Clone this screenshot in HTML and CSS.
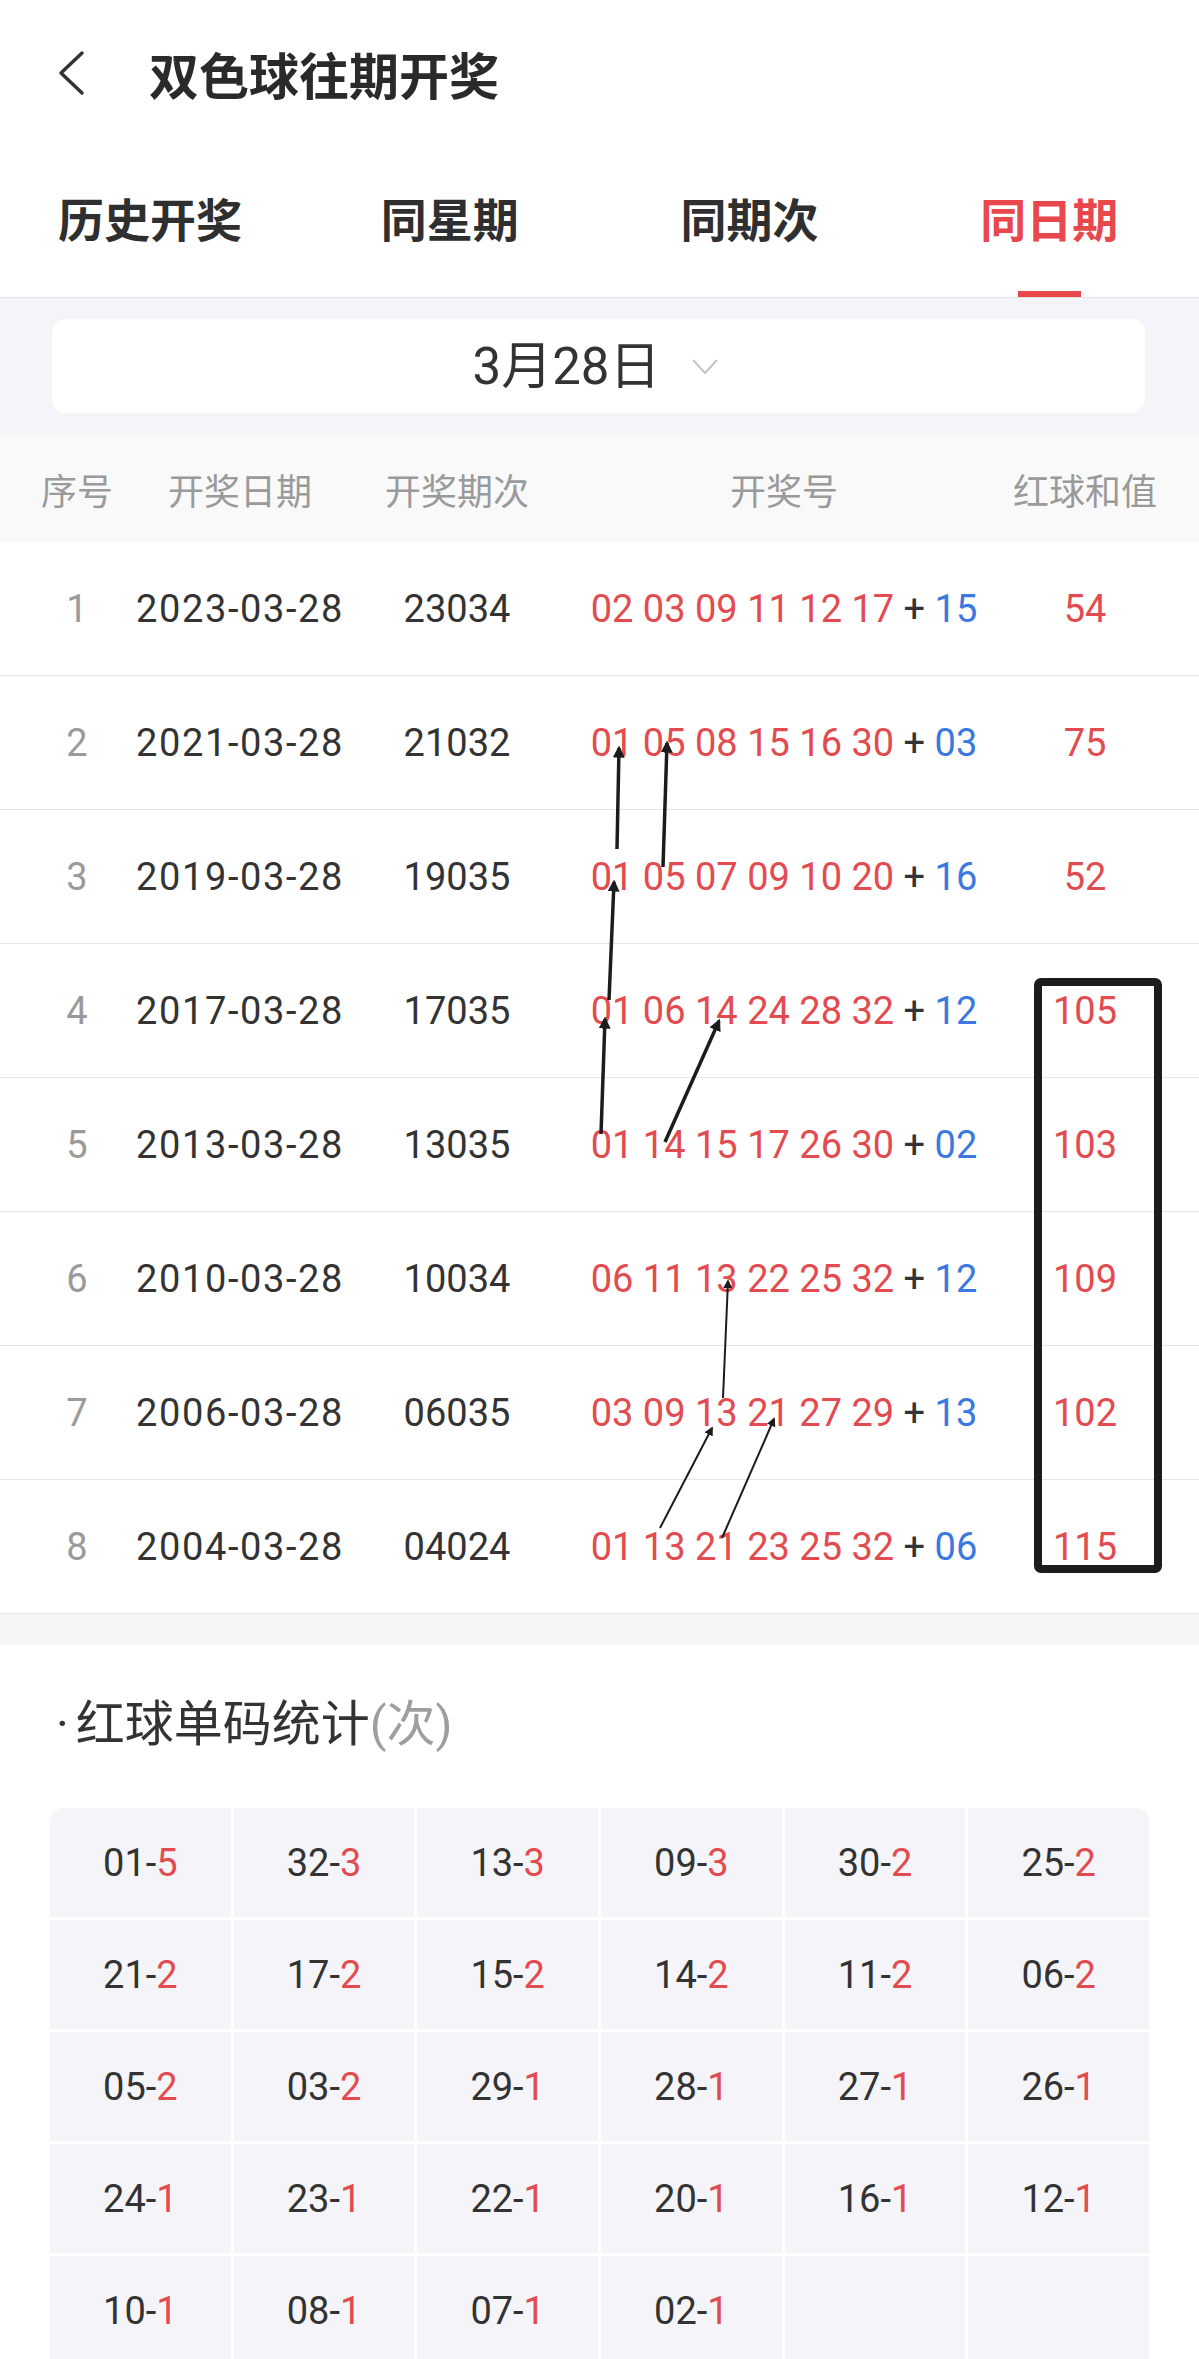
FILE: index.html
```html
<!DOCTYPE html>
<html lang="zh-CN">
<head>
    <meta charset="UTF-8">
    <meta name="viewport" content="width=device-width, initial-scale=1.0">
    <title>双色球往期开奖</title>
    <link rel="stylesheet" href="styles.css">
</head>
<body>
    <div class="page">
        <header class="top-bar">
            <svg class="back-icon" width="30" height="46" viewBox="0 0 30 46">
                <polyline points="26,3 5,23 26,43" fill="none" stroke="#333" stroke-width="3.5" stroke-linecap="round" stroke-linejoin="round"/>
            </svg>
            <h1>双色球往期开奖</h1>
        </header>

        <nav class="tabs">
            <div class="tab">历史开奖</div>
            <div class="tab">同星期</div>
            <div class="tab">同期次</div>
            <div class="tab active">同日期</div>
        </nav>

        <div class="date-bar">
            <div class="date-picker">
                <span class="date-text">3月28日</span>
                <svg width="28" height="17" viewBox="0 0 28 17">
                    <polyline points="2,2 14,15 26,2" fill="none" stroke="#c4c4c4" stroke-width="2"/>
                </svg>
            </div>
        </div>

        <div class="draw-table">
            <div class="row head">
                <div>序号</div>
                <div>开奖日期</div>
                <div>开奖期次</div>
                <div>开奖号</div>
                <div>红球和值</div>
            </div>
            <div class="row">
                <div class="no">1</div>
                <div class="date">2023-03-28</div>
                <div>23034</div>
                <div><span class="red">02 03 09 11 12 17</span> + <span class="blue">15</span></div>
                <div class="red">54</div>
            </div>
            <div class="row">
                <div class="no">2</div>
                <div class="date">2021-03-28</div>
                <div>21032</div>
                <div><span class="red">01 05 08 15 16 30</span> + <span class="blue">03</span></div>
                <div class="red">75</div>
            </div>
            <div class="row">
                <div class="no">3</div>
                <div class="date">2019-03-28</div>
                <div>19035</div>
                <div><span class="red">01 05 07 09 10 20</span> + <span class="blue">16</span></div>
                <div class="red">52</div>
            </div>
            <div class="row">
                <div class="no">4</div>
                <div class="date">2017-03-28</div>
                <div>17035</div>
                <div><span class="red">01 06 14 24 28 32</span> + <span class="blue">12</span></div>
                <div class="red">105</div>
            </div>
            <div class="row">
                <div class="no">5</div>
                <div class="date">2013-03-28</div>
                <div>13035</div>
                <div><span class="red">01 14 15 17 26 30</span> + <span class="blue">02</span></div>
                <div class="red">103</div>
            </div>
            <div class="row">
                <div class="no">6</div>
                <div class="date">2010-03-28</div>
                <div>10034</div>
                <div><span class="red">06 11 13 22 25 32</span> + <span class="blue">12</span></div>
                <div class="red">109</div>
            </div>
            <div class="row">
                <div class="no">7</div>
                <div class="date">2006-03-28</div>
                <div>06035</div>
                <div><span class="red">03 09 13 21 27 29</span> + <span class="blue">13</span></div>
                <div class="red">102</div>
            </div>
            <div class="row">
                <div class="no">8</div>
                <div class="date">2004-03-28</div>
                <div>04024</div>
                <div><span class="red">01 13 21 23 25 32</span> + <span class="blue">06</span></div>
                <div class="red">115</div>
            </div>
        </div>

        <div class="divider"></div>

        <section class="stats">
            <h2><span class="dot">·</span>红球单码统计<span class="unit">(次)</span></h2>
            <div class="stats-grid">
                <div class="cell">01-<span class="red">5</span></div>
                <div class="cell">32-<span class="red">3</span></div>
                <div class="cell">13-<span class="red">3</span></div>
                <div class="cell">09-<span class="red">3</span></div>
                <div class="cell">30-<span class="red">2</span></div>
                <div class="cell">25-<span class="red">2</span></div>

                <div class="cell">21-<span class="red">2</span></div>
                <div class="cell">17-<span class="red">2</span></div>
                <div class="cell">15-<span class="red">2</span></div>
                <div class="cell">14-<span class="red">2</span></div>
                <div class="cell">11-<span class="red">2</span></div>
                <div class="cell">06-<span class="red">2</span></div>

                <div class="cell">05-<span class="red">2</span></div>
                <div class="cell">03-<span class="red">2</span></div>
                <div class="cell">29-<span class="red">1</span></div>
                <div class="cell">28-<span class="red">1</span></div>
                <div class="cell">27-<span class="red">1</span></div>
                <div class="cell">26-<span class="red">1</span></div>

                <div class="cell">24-<span class="red">1</span></div>
                <div class="cell">23-<span class="red">1</span></div>
                <div class="cell">22-<span class="red">1</span></div>
                <div class="cell">20-<span class="red">1</span></div>
                <div class="cell">16-<span class="red">1</span></div>
                <div class="cell">12-<span class="red">1</span></div>

                <div class="cell">10-<span class="red">1</span></div>
                <div class="cell">08-<span class="red">1</span></div>
                <div class="cell">07-<span class="red">1</span></div>
                <div class="cell">02-<span class="red">1</span></div>
                <div class="cell"></div>
                <div class="cell"></div>
            </div>
        </section>

        <!-- hand-drawn marks on top of the table -->
        <svg class="marks" width="1199" height="2359" viewBox="0 0 1199 2359">
            <defs>
                <marker id="head" viewBox="0 0 10 10" refX="8" refY="5" markerUnits="userSpaceOnUse" markerWidth="12" markerHeight="12" orient="auto">
                    <path d="M0,0 L10,5 L0,10 z" fill="#1c1c1c"/>
                </marker>
                <marker id="head-sm" viewBox="0 0 10 10" refX="8" refY="5" markerUnits="userSpaceOnUse" markerWidth="9" markerHeight="9" orient="auto">
                    <path d="M0,0 L10,5 L0,10 z" fill="#1c1c1c"/>
                </marker>
            </defs>
            <g stroke="#1c1c1c" stroke-width="3.5" fill="none">
                <line x1="617" y1="849" x2="619" y2="748" marker-end="url(#head)"/>
                <line x1="663" y1="867" x2="667" y2="743" marker-end="url(#head)"/>
                <line x1="609" y1="1000" x2="614" y2="882" marker-end="url(#head)"/>
                <line x1="601" y1="1134" x2="605" y2="1019" marker-end="url(#head)"/>
                <line x1="665" y1="1142" x2="719" y2="1021" marker-end="url(#head)"/>
            </g>
            <g stroke="#1c1c1c" stroke-width="2" fill="none">
                <line x1="723" y1="1398" x2="728" y2="1281" marker-end="url(#head-sm)"/>
                <line x1="660" y1="1528" x2="712" y2="1428" marker-end="url(#head-sm)"/>
                <line x1="722" y1="1538" x2="774" y2="1419" marker-end="url(#head-sm)"/>
            </g>
            <rect x="1038" y="982" width="120" height="587" rx="3" fill="none" stroke="#1c1c1c" stroke-width="8"/>
        </svg>
    </div>
</body>
</html>
```

FILE: styles.css
```css
* {
    box-sizing: border-box;
    margin: 0;
    padding: 0;
}

body {
    font-family: Roboto, 'Noto Sans CJK SC', sans-serif;
    background: #fff;
    color: #333;
}

.page {
    position: relative;
    width: 1199px;
    height: 2359px;
    overflow: hidden;
}

/* header */
.top-bar {
    height: 146px;
    display: flex;
    align-items: center;
    padding-left: 56px;
}

.back-icon {
    margin-right: 63px;
}

.top-bar h1 {
    font-family: 'Noto Sans CJK SC', sans-serif;
    font-size: 50px;
    font-weight: 700;
    color: #2a2a2a;
    line-height: 1;
}

/* tabs */
.tabs {
    height: 152px;
    display: grid;
    grid-template-columns: repeat(4, 1fr);
    border-bottom: 1px solid #e4e4e4;
}

.tab {
    position: relative;
    display: flex;
    align-items: center;
    justify-content: center;
    padding-bottom: 9px;
    font-family: 'Noto Sans CJK SC', sans-serif;
    font-size: 46px;
    font-weight: 700;
    color: #2f2f2f;
}

.tab.active {
    color: #e8474b;
}

.tab.active::after {
    content: '';
    position: absolute;
    bottom: 0;
    left: 50%;
    width: 63px;
    height: 6px;
    margin-left: -31px;
    background: #e8474b;
}

/* date picker */
.date-bar {
    background: #f5f5f9;
    padding: 21px 54px 22px 52px;
}

.date-picker {
    height: 94px;
    background: #fff;
    border-radius: 14px;
    display: flex;
    align-items: center;
    justify-content: center;
    gap: 30px;
    padding-right: 6px;
}

.date-text {
    font-size: 51px;
    color: #333;
    line-height: 1;
}

/* draw table */
.row {
    display: grid;
    grid-template-columns: 154px 172px 262px 392px 1fr;
    align-items: center;
    height: 134px;
    border-bottom: 1px solid #e6e6e6;
    font-size: 38px;
    color: #333;
    text-align: center;
    white-space: nowrap;
}

.row > div:last-child {
    padding-right: 9px;
}

.row.head {
    height: 107px;
    background: #f9f9f9;
    border-bottom: none;
    font-family: 'Noto Sans CJK SC', sans-serif;
    font-size: 36px;
    color: #9a9a9a;
}

.row .no {
    color: #9a9a9a;
}

/* the date is wider than its column, flex keeps it centred */
.row .date {
    display: flex;
    justify-content: center;
    letter-spacing: 1.6px;
}

.red {
    color: #e24b4f;
}

.blue {
    color: #3b78e0;
}

.divider {
    height: 31px;
    background: #f6f6f6;
}

/* stats */
.stats {
    padding: 49px 50px 0;
}

.stats h2 {
    font-size: 49px;
    font-weight: 400;
    line-height: 62px;
    color: #333;
    margin-left: 6px;
}

.stats h2 .dot {
    margin-right: 7px;
}

.stats h2 .unit {
    color: #9e9e9e;
}

.stats-grid {
    margin-top: 52px;
    display: grid;
    grid-template-columns: repeat(6, 1fr);
    grid-auto-rows: 109px;
    gap: 3px;
    border-radius: 13px 13px 0 0;
    overflow: hidden;
}

.cell {
    background: #f5f5f9;
    display: flex;
    align-items: center;
    justify-content: center;
    font-size: 38px;
    color: #333;
}

.marks {
    position: absolute;
    top: 0;
    left: 0;
    pointer-events: none;
}
```
